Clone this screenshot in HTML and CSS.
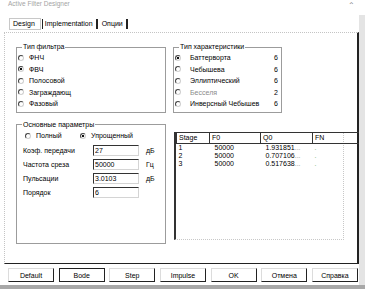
FILE: index.html
```html
<!DOCTYPE html>
<html lang="ru">
<head>
    <meta charset="UTF-8">
    <title>Active Filter Designer</title>
    <link rel="stylesheet" href="styles.css">
</head>
<body>
<div class="window">
    <div class="main">
        <div class="titlebar">
            <span class="title">Active Filter Designer</span>
            <span class="chevron">&#8963;</span>
        </div>
        <div class="tabs">
            <span class="tab active">Design</span>
            <span class="tab">Implementation</span>
            <span class="tab">Опции</span>
        </div>
        <div class="panel">
            <div class="row top">
                <fieldset class="group filter">
                    <legend>Тип фильтра</legend>
                    <div class="opt"><span class="radio"></span>ФНЧ</div>
                    <div class="opt"><span class="radio on"></span>ФВЧ</div>
                    <div class="opt"><span class="radio"></span>Полосовой</div>
                    <div class="opt"><span class="radio"></span>Заграждающ</div>
                    <div class="opt"><span class="radio"></span>Фазовый</div>
                </fieldset>
                <fieldset class="group response">
                    <legend>Тип характеристики</legend>
                    <div class="opt"><span class="radio on"></span><span class="name">Баттерворта</span><span class="count">6</span></div>
                    <div class="opt"><span class="radio"></span><span class="name">Чебышева</span><span class="count">6</span></div>
                    <div class="opt"><span class="radio"></span><span class="name">Эллиптический</span><span class="count">6</span></div>
                    <div class="opt"><span class="radio"></span><span class="name muted">Бесселя</span><span class="count">2</span></div>
                    <div class="opt"><span class="radio"></span><span class="name">Инверсный Чебышев</span><span class="count">6</span></div>
                </fieldset>
            </div>
            <div class="row bottom">
                <fieldset class="group params">
                    <legend>Основные параметры</legend>
                    <div class="mode">
                        <span class="opt"><span class="radio"></span>Полный</span>
                        <span class="opt"><span class="radio on"></span>Упрощенный</span>
                    </div>
                    <div class="fields">
                        <div class="field"><label>Коэф. передачи</label><input type="text" value="27"><span class="unit">дБ</span></div>
                        <div class="field"><label>Частота среза</label><input type="text" value="50000"><span class="unit">Гц</span></div>
                        <div class="field"><label>Пульсации</label><input type="text" value="3.0103"><span class="unit">дБ</span></div>
                        <div class="field"><label>Порядок</label><input type="text" value="6"></div>
                    </div>
                </fieldset>
                <div class="stages">
                    <table>
                        <thead>
                        <tr><th class="c-stage">Stage</th><th class="c-f0">F0</th><th class="c-q0">Q0</th><th class="c-fn">FN</th></tr>
                        </thead>
                        <tbody>
                        <tr><td>1</td><td>50000</td><td>1.931851<span class="dots">...</span></td><td class="fn">.</td></tr>
                        <tr><td>2</td><td>50000</td><td>0.707106<span class="dots">...</span></td><td class="fn">.</td></tr>
                        <tr><td>3</td><td>50000</td><td>0.517638<span class="dots">...</span></td><td class="fn">.</td></tr>
                        </tbody>
                    </table>
                </div>
            </div>
        </div>
        <div class="buttons">
            <button>Default</button>
            <button class="default">Bode</button>
            <button>Step</button>
            <button>Impulse</button>
            <button>OK</button>
            <button>Отмена</button>
            <button>Справка</button>
        </div>
    </div>
    <div class="scroll"></div>
</div>
<div class="statusbar"></div>
</body>
</html>
```

FILE: styles.css
```css
body {
    margin: 0;
    width: 365px;
    height: 289px;
    overflow: hidden;
    background: #fff;
    color: #000;
    font-family: "Liberation Sans", Arial, sans-serif;
    font-size: 7px;
    display: flex;
    flex-direction: column;
}

.window {
    display: flex;
    height: 285px;
}

.main {
    width: 359px;
    display: flex;
    flex-direction: column;
}

.scroll {
    width: 6px;
    margin-top: 15px;
    background: #e4e4e4;
}

.statusbar {
    height: 4px;
    background: #a8a8a8;
}

/* title + tabs */

.titlebar {
    height: 15px;
    display: flex;
    justify-content: space-between;
    padding: 0 4px 0 8px;
    color: #a4a4a4;
}

.title {
    line-height: 8px;
    margin-top: 0;
    font-size: 6.5px;
}

.chevron {
    line-height: 10px;
    margin-top: 1px;
    font-size: 8px;
    color: #888;
}

.tabs {
    height: 17px;
    display: flex;
    align-items: flex-start;
    padding: 4px 0 0 10px;
    box-sizing: border-box;
}

.tab {
    height: 10px;
    line-height: 10px;
    padding: 0 3px;
    margin-right: 1px;
    border-right: 2px solid #222;
}

.tab.active {
    outline: 1px solid #c8c8c8;
    outline-offset: 0;
    margin-right: 2px;
    border-right-color: transparent;
    box-shadow: 2px 0 0 #fff, 3px 0 0 #222;
}

/* tab page */

.panel {
    height: 232px;
    margin-left: 4px;
    border-top: 1px dotted #c4c4c4;
    border-left: 1px dotted #c4c4c4;
    border-right: 2px solid #222;
    border-bottom: 1px solid #222;
    padding: 10px 0 0 11px;
    box-sizing: border-box;
}

.row {
    display: flex;
    gap: 7px;
}

.row.bottom {
    margin-top: 8px;
    height: 123px;
}

.group {
    margin: 0;
    min-width: 0;
    padding: 1px 0 2px 1px;
    border: 1px solid #9c9c9c;
    box-sizing: border-box;
}

.group legend {
    padding: 0 1px;
    margin-left: 4px;
    line-height: 8px;
}

.filter {
    width: 150px;
}

.response {
    width: 109px;
}

.params {
    width: 150px;
}

.opt {
    height: 11.5px;
    display: flex;
    align-items: center;
}

.radio {
    width: 4px;
    height: 4px;
    border-radius: 50%;
    border: 1px solid;
    border-color: #444 #d0d0d0 #d0d0d0 #444;
    margin-right: 5px;
    flex: none;
}

.radio.on {
    background: radial-gradient(circle, #111 0 1.2px, transparent 1.6px);
}

.response .radio {
    margin-right: 9px;
}

.name {
    flex: 1;
    white-space: nowrap;
}

.muted {
    color: #8a8a8a;
}

.count {
    width: 5px;
    margin-right: 3px;
    text-align: right;
}

/* main parameters */

.mode {
    display: flex;
    padding-left: 7px;
    height: 12px;
}

.mode .opt {
    height: 12px;
    width: 55px;
}

.fields {
    margin-top: 2px;
    padding-left: 5px;
}

.field {
    height: 14px;
    display: flex;
    align-items: center;
}

.field label {
    width: 70px;
}

.field input {
    width: 46px;
    height: 11px;
    box-sizing: border-box;
    margin: 0 7px 0 0;
    padding: 0 1px;
    border: 1px solid;
    border-color: #333 #d4d4d4 #d4d4d4 #333;
    font-family: inherit;
    font-size: 7px;
    color: #000;
}

/* stages list */

.stages {
    width: 170px;
    height: 108px;
    margin-top: 11px;
    margin-left: 1px;
    border-left: 2px solid #333;
    border-right: 1px dotted #c8c8c8;
    border-bottom: 1px dotted #c8c8c8;
    box-sizing: border-box;
}

.stages table {
    border-collapse: collapse;
    table-layout: fixed;
    width: 165px;
}

.stages th {
    height: 10px;
    padding: 0 2px;
    border: 1px solid #333;
    text-align: left;
    font-weight: normal;
    line-height: 8px;
}

.stages td {
    height: 8px;
    line-height: 8px;
    padding: 0 2px;
    white-space: nowrap;
    overflow: hidden;
}

.stages td:nth-child(2),
.stages td:nth-child(3) {
    padding-left: 5px;
}

.c-stage { width: 28px; }
.c-f0 { width: 46px; }
.c-q0 { width: 47px; }
.c-fn { width: 44px; }

.dots {
    color: #999;
}

.fn {
    color: #6a6;
}

/* dialog buttons */

.buttons {
    flex: 1;
    display: flex;
    justify-content: space-between;
    padding: 4px 1px 0 8px;
}

.buttons button {
    width: 46px;
    height: 14px;
    padding: 0;
    background: #fff;
    border: 1px solid;
    border-color: #dcdcdc #222 #222 #dcdcdc;
    font-family: inherit;
    font-size: 7px;
    color: #000;
}

.buttons button.default {
    border-color: #222;
}
```
